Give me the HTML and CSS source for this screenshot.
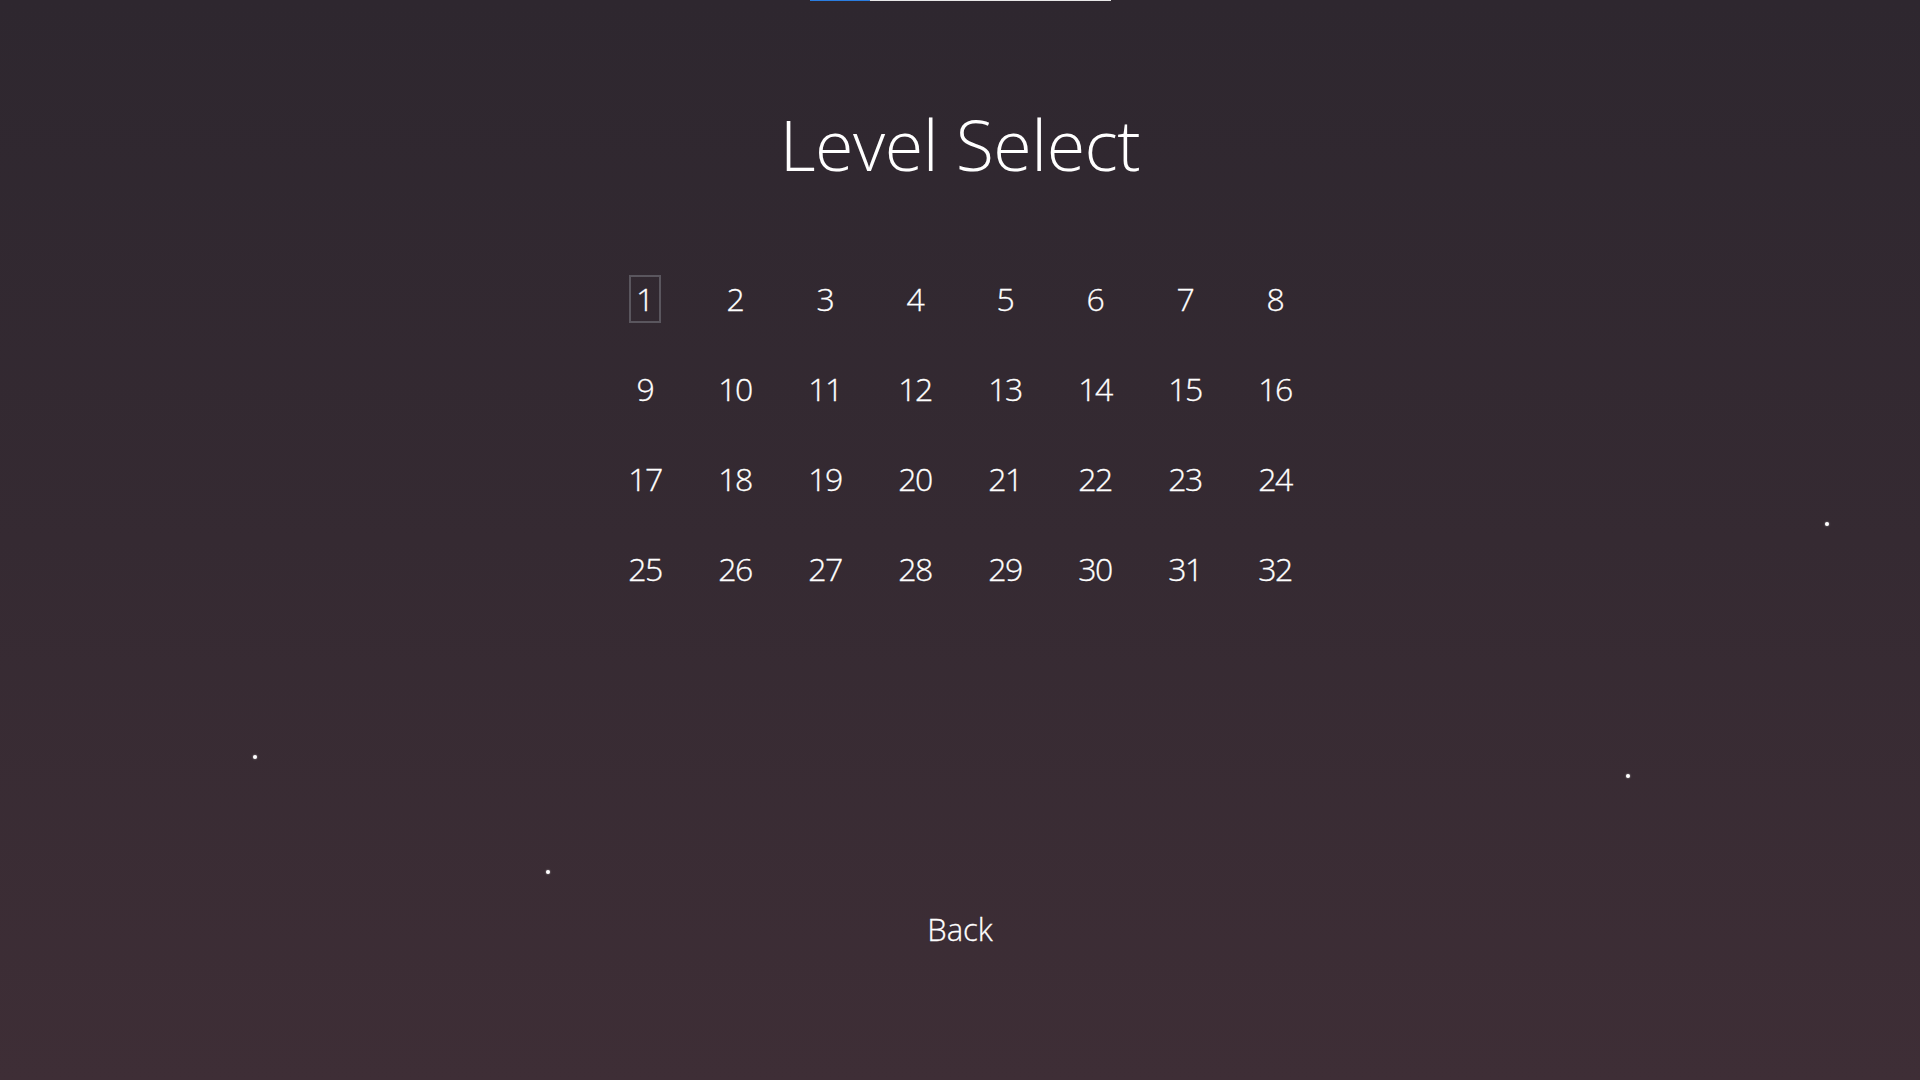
FILE: index.html
```html
<!DOCTYPE html>
<html>
<head>
<meta charset="utf-8">
<link rel="stylesheet" href="styles.css">
</head>
<body>
<div class="screen">
  <div class="progress"><div class="progress-fill"></div></div>
  <h1 class="title">Level Select</h1>
  <div class="grid">
    <button class="level selected">1</button><button class="level">2</button><button class="level">3</button><button class="level">4</button><button class="level">5</button><button class="level">6</button><button class="level">7</button><button class="level">8</button>
    <button class="level">9</button><button class="level">10</button><button class="level">11</button><button class="level">12</button><button class="level">13</button><button class="level">14</button><button class="level">15</button><button class="level">16</button>
    <button class="level">17</button><button class="level">18</button><button class="level">19</button><button class="level">20</button><button class="level">21</button><button class="level">22</button><button class="level">23</button><button class="level">24</button>
    <button class="level">25</button><button class="level">26</button><button class="level">27</button><button class="level">28</button><button class="level">29</button><button class="level">30</button><button class="level">31</button><button class="level">32</button>
  </div>
  <button class="back">Back</button>
  <span class="star" style="left:1825px;top:522px"></span>
  <span class="star" style="left:253px;top:755px"></span>
  <span class="star" style="left:546px;top:870px"></span>
  <span class="star" style="left:1626px;top:774px"></span>
</div>
</body>
</html>
```
FILE: styles.css
```css
html, body {
  margin: 0;
  padding: 0;
}
body {
  width: 1920px;
  height: 1080px;
  overflow: hidden;
  font-family: "Open Sans", "Noto Sans", sans-serif;
  color: #ffffff;
}
.screen {
  position: relative;
  width: 1920px;
  height: 1080px;
  display: flex;
  flex-direction: column;
  align-items: center;
  background: linear-gradient(180deg, #2e272f 0%, #352a32 50%, #3e2e36 100%);
}
.progress {
  width: 301px;
  height: 1px;
  background: #e8e8e8;
}
.progress-fill {
  width: 60px;
  height: 100%;
  background: #2a7de1;
}
.title {
  margin: 98px 0 0;
  font-weight: 300;
  font-size: 70px;
  line-height: 90px;
  letter-spacing: -0.5px;
}
.grid {
  margin-top: 65px;
  display: grid;
  grid-template-columns: repeat(8, 90px);
  grid-auto-rows: 90px;
  justify-items: center;
  align-items: center;
}
.level, .back {
  background: none;
  border: 2px solid transparent;
  color: #ffffff;
  font-family: "Open Sans", "Noto Sans", sans-serif;
  font-weight: 300;
  padding: 0 4px;
  cursor: pointer;
}
.level {
  font-size: 32px;
  line-height: 44px;
  letter-spacing: -1.5px;
  -webkit-text-stroke: 0.3px #ffffff;
}
.level.selected {
  border-color: #5a565e;
  padding: 0 6px 0 5px;
}
.back {
  margin-top: 291px;
  font-size: 31px;
  line-height: 44px;
  -webkit-text-stroke: 0.3px #ffffff;
}
.star {
  position: absolute;
  width: 4px;
  height: 4px;
  border-radius: 50%;
  background: #ffffff;
  box-shadow: 0 0 2px rgba(255,255,255,0.6);
}
```
